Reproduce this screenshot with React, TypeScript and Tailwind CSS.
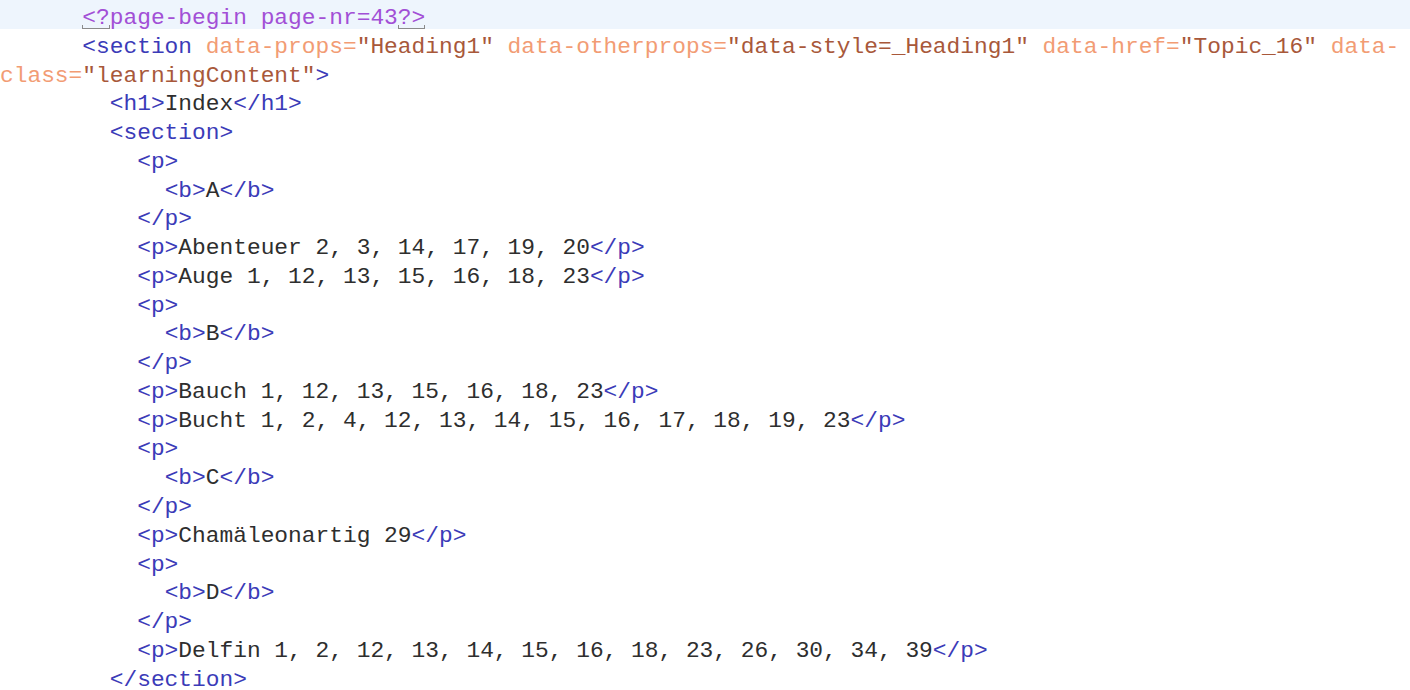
type Seg = { t: string; c: string; mark?: boolean };

const TAG = "text-[#3b3bb8]";
const TXT = "text-[#2e2e2e]";
const ATTR = "text-[#f29c74]";
const VAL = "text-[#a8583a]";
const PI = "text-[#a24fd6]";

const tag = (t: string): Seg => ({ t, c: TAG });
const txt = (t: string): Seg => ({ t, c: TXT });
const attr = (t: string): Seg => ({ t, c: ATTR });
const val = (t: string): Seg => ({ t, c: VAL });

const entry = (indent: string, text: string): Seg[] => [
  txt(indent),
  tag("<p>"),
  txt(text),
  tag("</p>"),
];

const letter = (l: string): Seg[][] => [
  [txt("          "), tag("<p>")],
  [txt("            "), tag("<b>"), txt(l), tag("</b>")],
  [txt("          "), tag("</p>")],
];

const lines: Seg[][] = [
  [
    txt("      "),
    { t: "<?", c: PI, mark: true },
    { t: "page-begin page-nr=43", c: PI },
    { t: "?>", c: PI, mark: true },
  ],
  [
    txt("      "),
    tag("<section"),
    txt(" "),
    attr("data-props="),
    val('"Heading1"'),
    txt(" "),
    attr("data-otherprops="),
    val('"data-style=_Heading1"'),
    txt(" "),
    attr("data-href="),
    val('"Topic_16"'),
    txt(" "),
    attr("data-"),
  ],
  [attr("class="), val('"learningContent"'), tag(">")],
  [txt("        "), tag("<h1>"), txt("Index"), tag("</h1>")],
  [txt("        "), tag("<section>")],
  ...letter("A"),
  entry("          ", "Abenteuer 2, 3, 14, 17, 19, 20"),
  entry("          ", "Auge 1, 12, 13, 15, 16, 18, 23"),
  ...letter("B"),
  entry("          ", "Bauch 1, 12, 13, 15, 16, 18, 23"),
  entry("          ", "Bucht 1, 2, 4, 12, 13, 14, 15, 16, 17, 18, 19, 23"),
  ...letter("C"),
  entry("          ", "Chamäleonartig 29"),
  ...letter("D"),
  entry("          ", "Delfin 1, 2, 12, 13, 14, 15, 16, 18, 23, 26, 30, 34, 39"),
  [txt("        "), tag("</section>")],
];

function Line({ segs, active }: { segs: Seg[]; active: boolean }) {
  return (
    <div
      className={
        "h-[28.78px] pt-[8px] leading-[20.78px] whitespace-pre " +
        (active ? "bg-[#eef5fd]" : "")
      }
    >
      {segs.map((s, i) =>
        s.mark ? (
          <span key={i} className={"relative " + s.c}>
            {s.t}
            <span className="absolute left-0 right-0 bottom-[2px] h-[4px] border-l border-r border-b border-[#8a8a8a]" />
          </span>
        ) : (
          <span key={i} className={s.c}>
            {s.t}
          </span>
        )
      )}
    </div>
  );
}

export default function App() {
  return (
    <div className="w-[1410px] h-[690px] overflow-hidden bg-white font-['Liberation_Mono',monospace] text-[22.87px]">
      {lines.map((segs, i) => (
        <Line key={i} segs={segs} active={i === 0} />
      ))}
    </div>
  );
}
